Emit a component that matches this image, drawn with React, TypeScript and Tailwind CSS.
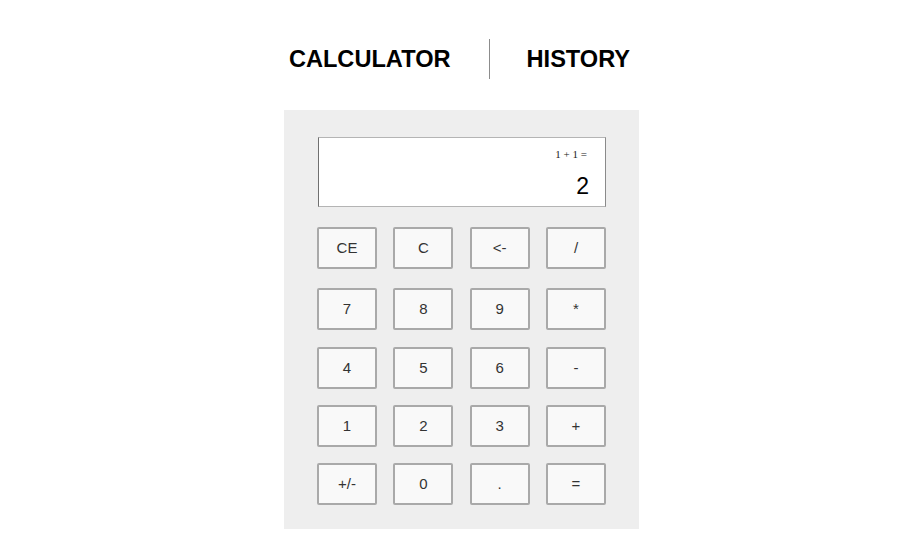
import React from "react";

// Button rows, top to bottom. The spacing above each row differs slightly in the design.
const ROWS: { keys: string[]; spacing: string }[] = [
  { keys: ["CE", "C", "<-", "/"], spacing: "mt-[20px]" },
  { keys: ["7", "8", "9", "*"], spacing: "mt-[19px]" },
  { keys: ["4", "5", "6", "-"], spacing: "mt-[17px]" },
  { keys: ["1", "2", "3", "+"], spacing: "mt-[16px]" },
  { keys: ["+/-", "0", ".", "="], spacing: "mt-[16px]" },
];

export default function App() {
  return (
    <div className="min-h-screen bg-white font-['Liberation_Sans',Arial,sans-serif] text-black">
      <div className="flex flex-col items-center pl-[20px]">
        {/* TABS */}
        <div className="mt-[39px] mr-[4px] flex items-center">
          <span className="text-[23.6px] font-bold leading-[28px]">CALCULATOR</span>
          <div className="ml-[38px] mr-[37px] h-[40px] w-px bg-[#8c8c8c]" />
          <span className="text-[23.6px] font-bold leading-[28px]">HISTORY</span>
        </div>

        {/* CALCULATOR BODY */}
        <div className="mt-[31px] w-[355px] bg-[#eeeeee] pl-[33px] pr-[33px] pt-[27px] pb-[24px]">
          <div className="ml-px h-[70px] w-[288px] border border-t-[#b4b4b4] border-b-[#b4b4b4] border-l-[#707070] border-r-[#8a8a8a] bg-white pr-[16px] pt-[10px] flex flex-col items-end">
            <span className="mr-[2px] font-['Liberation_Serif','Times_New_Roman',serif] text-[11px] leading-[13px] text-[#222]">
              1 + 1 =
            </span>
            <span className="mt-[12px] text-[23px] leading-[26px] text-black">2</span>
          </div>

          {ROWS.map((row, i) => (
            <div key={i} className={`${row.spacing} flex w-[289px] justify-between`}>
              {row.keys.map((k) => (
                <button
                  key={k}
                  type="button"
                  className="h-[42px] w-[60px] rounded-[2px] border-2 border-[#a9a9a9] bg-[#f9f9f9] text-[15px] text-[#333]"
                >
                  {k}
                </button>
              ))}
            </div>
          ))}
        </div>
      </div>
    </div>
  );
}
